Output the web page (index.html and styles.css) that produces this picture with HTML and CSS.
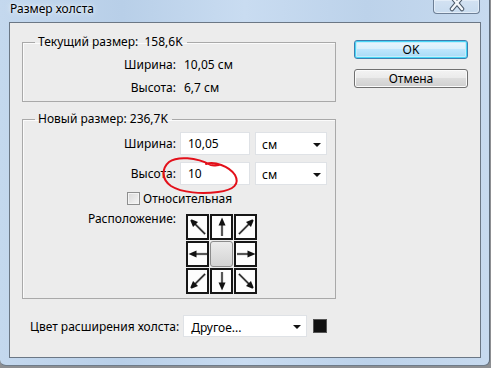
FILE: index.html
```html
<!DOCTYPE html>
<html lang="ru">
  <head>
    <meta charset="UTF-8" />
    <title>Размер холста</title>
    <link rel="stylesheet" href="styles.css">
  </head>
  <body>
    <div class="window">
      <div class="titlebar">
        <span class="title">Размер холста</span>
        <span class="close-btn">
          <svg width="18" height="12" viewBox="0 0 18 12">
            <path d="M4 -3 L14 9 M14 -3 L4 9" stroke="#4a5868" stroke-width="4.5" stroke-linecap="round" />
            <path d="M4 -3 L14 9 M14 -3 L4 9" stroke="#f4f7fa" stroke-width="2.5" stroke-linecap="round" />
          </svg>
        </span>
      </div>

      <div class="client">
        <div class="main">
          <div class="groups">
            <fieldset class="group group-current">
              <legend>Текущий размер:&nbsp; 158,6K</legend>
              <div class="info-row">
                <span class="label">Ширина:</span>
                <span class="value">10,05 см</span>
              </div>
              <div class="info-row">
                <span class="label">Высота:</span>
                <span class="value">6,7 см</span>
              </div>
            </fieldset>

            <fieldset class="group group-new">
              <legend>Новый размер: 236,7K</legend>
              <div class="field-row">
                <label class="label">Ширина:</label>
                <input class="num" type="text" value="10,05" />
                <div class="select"><span>см</span><i class="caret"></i></div>
              </div>
              <div class="field-row">
                <label class="label">Высота:</label>
                <input class="num" type="text" value="10" />
                <div class="select"><span>см</span><i class="caret"></i></div>
              </div>
              <label class="check-row">
                <span class="checkbox"></span>
                <span>Относительная</span>
              </label>
              <div class="anchor-row">
                <span class="label anchor-label">Расположение:</span>
                <div class="anchor-grid">
                  <span class="cell"><svg class="arrow a-nw" viewBox="0 0 20 20"><use href="#arrow-d" /></svg></span>
                  <span class="cell"><svg class="arrow a-n" viewBox="0 0 20 20"><use href="#arrow" /></svg></span>
                  <span class="cell"><svg class="arrow a-ne" viewBox="0 0 20 20"><use href="#arrow-d" /></svg></span>
                  <span class="cell"><svg class="arrow a-w" viewBox="0 0 20 20"><use href="#arrow" /></svg></span>
                  <span class="cell cell-center"></span>
                  <span class="cell"><svg class="arrow a-e" viewBox="0 0 20 20"><use href="#arrow" /></svg></span>
                  <span class="cell"><svg class="arrow a-sw" viewBox="0 0 20 20"><use href="#arrow-d" /></svg></span>
                  <span class="cell"><svg class="arrow a-s" viewBox="0 0 20 20"><use href="#arrow" /></svg></span>
                  <span class="cell"><svg class="arrow a-se" viewBox="0 0 20 20"><use href="#arrow-d" /></svg></span>
                </div>
              </div>
            </fieldset>
          </div>

          <div class="buttons">
            <button class="btn btn-ok">OK</button>
            <button class="btn">Отмена</button>
          </div>
        </div>

        <div class="bottom-row">
          <span class="bottom-label">Цвет расширения холста:</span>
          <div class="select select-wide"><span>Другое...</span><i class="caret"></i></div>
          <span class="swatch"></span>
        </div>
      </div>

      <!-- red hand-drawn mark over the height field -->
      <svg class="scribble" width="491" height="368" viewBox="0 0 491 368">
        <path d="M206 164 C214 161 229 166 235 175 C240 184 234 190 218 192 C202 194 182 193 171 186 C161 179 162 168 169 162 C177 156 196 157 211 165 C214 166 217 165 219 165"
              fill="none" stroke="#e3101a" stroke-width="2" stroke-linecap="round" />
      </svg>

      <svg width="0" height="0" class="defs">
        <defs>
          <linearGradient id="shaft" x1="0" x2="1" y1="0" y2="0">
            <stop offset="0" stop-color="#a0a0a0" />
            <stop offset="0.5" stop-color="#222" />
            <stop offset="1" stop-color="#a0a0a0" />
          </linearGradient>
          <g id="arrow">
            <rect x="8.8" y="7" width="2.4" height="12" fill="url(#shaft)" />
            <polygon points="10,0.5 6.5,8.5 13.5,8.5" fill="#111" />
          </g>
          <g id="arrow-d">
            <rect x="8.8" y="5" width="2.4" height="17" fill="url(#shaft)" />
            <polygon points="10,-2 6.5,6.5 13.5,6.5" fill="#111" />
          </g>
        </defs>
      </svg>
    </div>
  </body>
</html>
```

FILE: styles.css
```css
* {
  margin: 0;
  padding: 0;
  box-sizing: border-box;
}

body {
  background-color: #8d8f92;
  font-family: "Noto Sans", "DejaVu Sans", sans-serif;
  font-size: 12px;
  color: #000;
  width: 491px;
  height: 368px;
  overflow: hidden;
}

.window {
  position: relative;
  width: 490px;
  height: 366px;
  background: linear-gradient(90deg, #c4d8ee 0%, #b8cfe8 25%, #c9dcf1 50%, #bcd2ea 75%, #c7daef 100%);
  border-right: 1px solid #5d6b7a;
  border-bottom: 1px solid #6f7c8a;
  border-radius: 0 0 6px 6px;
}

.titlebar {
  display: flex;
  justify-content: space-between;
  align-items: flex-start;
  height: 22px;
  padding-left: 10px;
  padding-right: 9px;
}

.title {
  font-size: 12px;
  line-height: 18px;
  color: #000;
  text-shadow: 0 0 6px #e8f1fb, 0 0 3px #f2f7fc;
}

.close-btn {
  display: flex;
  justify-content: center;
  align-items: flex-end;
  width: 47px;
  height: 14px;
  border: 1px solid #6d7f96;
  border-top: none;
  border-radius: 0 0 4px 4px;
  background: linear-gradient(#d3e2f2, #c8dbef);
  box-shadow: inset 0 0 0 1px #e3edf8;
  padding-bottom: 1px;
}

.client {
  margin-left: 9px;
  width: 472px;
  height: 336px;
  background-color: #ececec;
  border: 1px solid #6b7785;
  padding: 0 12px 0 12px;
}

.main {
  display: flex;
  gap: 18px;
}

.groups {
  display: flex;
  flex-direction: column;
  gap: 10px;
  padding-top: 12px;
}

.group {
  width: 314px;
  border: 1px solid #a9a9a9;
  box-shadow: inset 1px 1px 0 #fbfbfb;
  padding: 0;
}

.group legend {
  margin-left: 12px;
  padding: 0 4px 0 3px;
  line-height: 14px;
}

.group-current {
  padding: 4px 0 2px 0;
}

.info-row {
  display: flex;
  align-items: center;
  height: 23px;
}

.label {
  width: 153px;
  text-align: right;
  flex-shrink: 0;
}

.info-row .value {
  margin-left: 8px;
}

.group-new {
  padding: 6px 0 4px 0;
}

.field-row {
  display: flex;
  align-items: center;
  gap: 4px;
  height: 23px;
  margin-bottom: 7px;
}

.num {
  width: 70px;
  height: 23px;
  border: 1px solid #dfe2e6;
  background: #fff;
  font-family: inherit;
  font-size: 12px;
  padding: 0 7px;
  outline: none;
}

.select {
  display: flex;
  align-items: center;
  justify-content: space-between;
  width: 72px;
  height: 23px;
  margin-left: 1px;
  background: #fff;
  border: 1px solid #dfe2e6;
  padding: 2px 5px 0 6px;
}

.caret {
  width: 0;
  height: 0;
  border-left: 4px solid transparent;
  border-right: 4px solid transparent;
  border-top: 4px solid #111;
}

.check-row {
  display: flex;
  align-items: center;
  gap: 3px;
  height: 16px;
  margin-top: -2px;
  padding-left: 104px;
}

.checkbox {
  width: 13px;
  height: 13px;
  border: 1px solid #8e8f8f;
  background: linear-gradient(135deg, #d8d8d8, #f6f6f6);
  box-shadow: inset 0 0 0 1px #f4f4f4;
}

.anchor-row {
  display: flex;
  align-items: flex-start;
  gap: 10px;
  margin-top: 8px;
}

.anchor-label {
  line-height: 10px;
}

.anchor-grid {
  display: grid;
  grid-template-columns: repeat(3, 23px);
  grid-template-rows: repeat(3, 26px);
  gap: 1px;
}

.cell {
  display: flex;
  align-items: center;
  justify-content: center;
  border: 2px solid #161616;
  background: #fdfdfd;
  overflow: hidden;
}

.cell-center {
  border: 1px solid #8c8c8c;
  border-radius: 3px;
  background: linear-gradient(#ebebeb, #d3d3d3);
}

.arrow {
  width: 20px;
  height: 20px;
  flex-shrink: 0;
}

.a-n { transform: rotate(0deg); }
.a-ne { transform: rotate(45deg); }
.a-e { transform: rotate(90deg); }
.a-se { transform: rotate(135deg); }
.a-s { transform: rotate(180deg); }
.a-sw { transform: rotate(225deg); }
.a-w { transform: rotate(270deg); }
.a-nw { transform: rotate(315deg); }

.buttons {
  display: flex;
  flex-direction: column;
  gap: 10px;
  padding-top: 17px;
}

.btn {
  width: 114px;
  height: 19px;
  border: 1px solid #707070;
  border-radius: 3px;
  background: linear-gradient(#f3f3f3 0%, #ebebeb 45%, #dddddd 50%, #cfcfcf 100%);
  box-shadow: inset 0 0 0 1px #fbfbfb;
  font-family: inherit;
  font-size: 12px;
  line-height: 15px;
  color: #000;
}

.btn-ok {
  border-color: #3c7fb1;
  background: linear-gradient(#eaf6fd 0%, #d9f0fc 45%, #bee6fd 50%, #a7d9f5 100%);
  box-shadow: inset 0 0 0 1px #48d6f6, inset 0 0 0 2px #c5ecfb;
}

.bottom-row {
  display: flex;
  align-items: center;
  margin-top: 16px;
  padding-left: 8px;
}

.bottom-label {
  margin-right: 4px;
}

.select-wide {
  width: 124px;
  height: 22px;
  margin-left: 0;
  padding-left: 7px;
}

.swatch {
  width: 14px;
  height: 14px;
  margin-left: 6px;
  background: #111;
  border: 1px solid #555;
}

.scribble {
  position: absolute;
  left: 0;
  top: 0;
  pointer-events: none;
}

.defs {
  position: absolute;
}
```
